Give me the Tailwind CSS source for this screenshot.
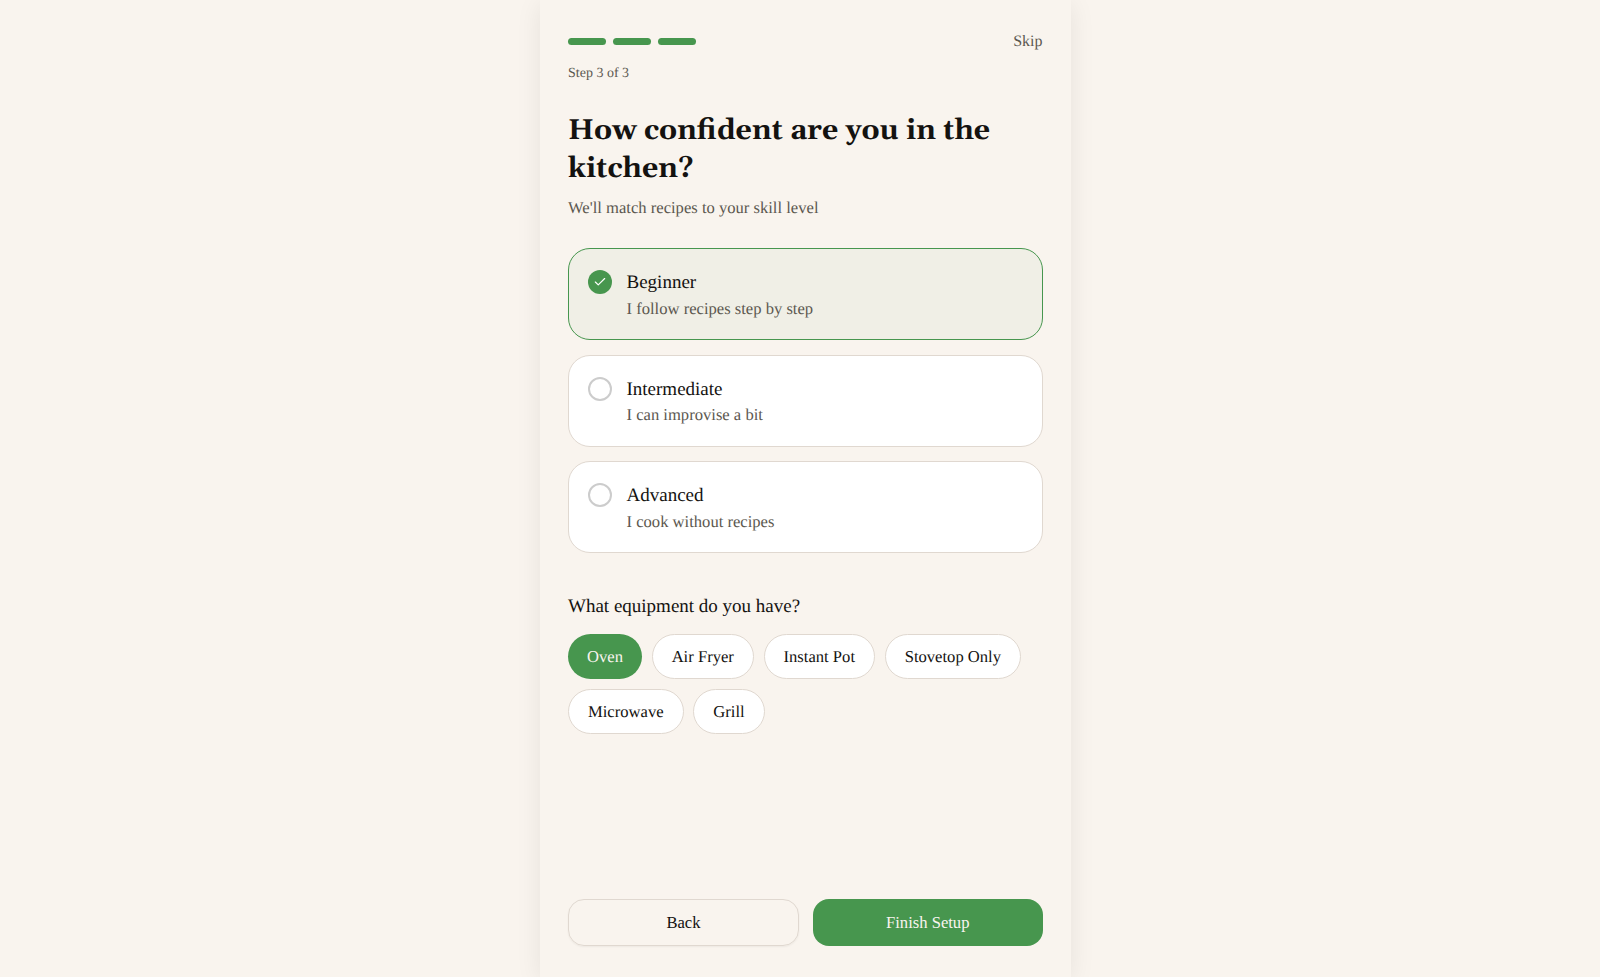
<!DOCTYPE html>
<html lang="en">
<head>
    <meta charset="UTF-8">
    <title>Onboarding</title>
    <script src="https://cdn.jsdelivr.net/npm/@tailwindcss/browser@4"></script>
</head>
<body class="bg-[#f9f4ee] font-['Liberation_Serif',serif] text-[#141210] [text-rendering:geometricPrecision]">
    <div class="ml-[540px] flex h-[977px] w-[531px] flex-col overflow-hidden bg-[#f9f4ee] pt-[32px] pr-[28.5px] pb-[31px] pl-7 shadow-[0_4px_24px_rgba(0,0,0,0.08)]">
        <div class="flex items-center justify-between">
            <div class="mb-px flex gap-[7px]">
                <div class="h-[7px] w-[38px] rounded-full bg-[#47964e]"></div>
                <div class="h-[7px] w-[38px] rounded-full bg-[#47964e]"></div>
                <div class="h-[7px] w-[38px] rounded-full bg-[#47964e]"></div>
            </div>
            <span class="text-[16px] leading-5 text-[#5c5850]">Skip</span>
        </div>
        <p class="mt-[12px] text-[14px] leading-5 text-[#5c5850]">Step 3 of 3</p>

        <h1 class="mt-[28px] font-['Georgia','Gelasio','Liberation_Serif',serif] text-[28.5px] leading-[38px] font-bold">How confident are you in the kitchen?</h1>
        <p class="mt-[8px] text-[16.6px] leading-6 text-[#5c5850]">We'll match recipes to your skill level</p>

        <div class="mt-[28px] flex flex-col gap-[14.5px]">
            <div class="flex h-[92px] gap-[15px] rounded-[22px] border-[1.5px] border-[#47964e] bg-[#f0efe6] pt-[21px] pr-5 pl-[18.5px]">
                <div class="flex size-6 shrink-0 items-center justify-center rounded-full bg-[#47964e]">
                    <svg class="size-3.5" viewBox="0 0 24 24" fill="none" stroke="white" stroke-width="2" stroke-linecap="round" stroke-linejoin="round"><path d="M20 6 9 17l-5-5"/></svg>
                </div>
                <div>
                    <div class="pt-px text-[19px] leading-6">Beginner</div>
                    <div class="mt-[1.5px] text-[16.6px] leading-6 text-[#5c5850]">I follow recipes step by step</div>
                </div>
            </div>
            <div class="flex h-[92px] gap-[15px] rounded-[22px] border-[1.5px] border-[#e0d8d0] bg-white pt-[21px] pr-5 pl-[18.5px]">
                <div class="size-6 shrink-0 rounded-full border-2 border-[#cccccc]"></div>
                <div>
                    <div class="pt-px text-[19px] leading-6">Intermediate</div>
                    <div class="mt-[1.5px] text-[16.6px] leading-6 text-[#5c5850]">I can improvise a bit</div>
                </div>
            </div>
            <div class="flex h-[92px] gap-[15px] rounded-[22px] border-[1.5px] border-[#e0d8d0] bg-white pt-[21px] pr-5 pl-[18.5px]">
                <div class="size-6 shrink-0 rounded-full border-2 border-[#cccccc]"></div>
                <div>
                    <div class="pt-px text-[19px] leading-6">Advanced</div>
                    <div class="mt-[1.5px] text-[16.6px] leading-6 text-[#5c5850]">I cook without recipes</div>
                </div>
            </div>
        </div>

        <h2 class="mt-[42px] text-[19px] leading-6">What equipment do you have?</h2>
        <div class="mt-[15px] flex flex-wrap gap-x-[9.7px] gap-y-[10px] text-[16.6px]">
            <span class="flex h-[45px] items-center rounded-full bg-[#47964e] px-[19px] pt-px text-[#f9f4ee]">Oven</span>
            <span class="flex h-[45px] items-center rounded-full border border-[#e0d8d0] bg-white px-[19px] pt-px">Air Fryer</span>
            <span class="flex h-[45px] items-center rounded-full border border-[#e0d8d0] bg-white px-[19px] pt-px">Instant Pot</span>
            <span class="flex h-[45px] items-center rounded-full border border-[#e0d8d0] bg-white px-[19px] pt-px">Stovetop Only</span>
            <span class="flex h-[45px] items-center rounded-full border border-[#e0d8d0] bg-white px-[19px] pt-px">Microwave</span>
            <span class="flex h-[45px] items-center rounded-full border border-[#e0d8d0] bg-white px-[19px] pt-px">Grill</span>
        </div>

        <div class="mt-auto flex gap-[14px] text-[16.6px]">
            <button class="h-[47px] w-[231px] rounded-2xl border border-[#e0d8d0] pt-px shadow-[0_1px_2px_rgba(0,0,0,0.05)]">Back</button>
            <button class="h-[47px] flex-1 rounded-2xl bg-[#47964e] pt-px text-[#f9f4ee]">Finish Setup</button>
        </div>
    </div>
</body>
</html>
